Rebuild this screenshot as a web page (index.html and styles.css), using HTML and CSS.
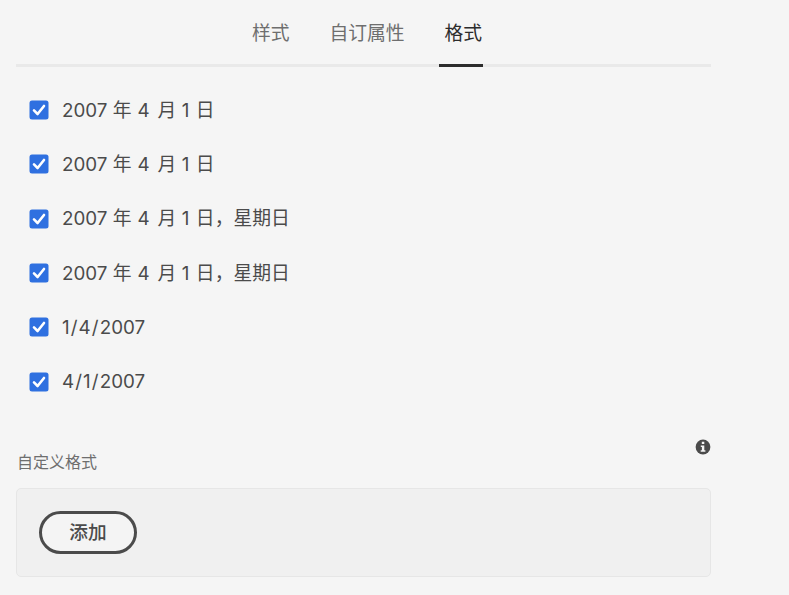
FILE: index.html
```html
<!DOCTYPE html>
<html lang="zh-CN">
<head>
<meta charset="utf-8">
<title>格式</title>
<link rel="stylesheet" href="styles.css">
</head>
<body>
<main class="panel">
  <nav class="tabs">
    <a class="tab">样式</a>
    <a class="tab">自订属性</a>
    <a class="tab active">格式</a>
  </nav>
  <ul class="formats">
    <li class="format"><svg class="check" viewBox="0 0 20 20"><rect x=".5" y=".5" width="19" height="19" rx="2.5"/><path d="M5 10.4 8.6 14 15 6"/></svg><span class="label">2007 年 <span class="month">4</span> 月 <span class="day">1</span> 日</span></li>
    <li class="format"><svg class="check" viewBox="0 0 20 20"><rect x=".5" y=".5" width="19" height="19" rx="2.5"/><path d="M5 10.4 8.6 14 15 6"/></svg><span class="label">2007 年 <span class="month">4</span> 月 <span class="day">1</span> 日</span></li>
    <li class="format"><svg class="check" viewBox="0 0 20 20"><rect x=".5" y=".5" width="19" height="19" rx="2.5"/><path d="M5 10.4 8.6 14 15 6"/></svg><span class="label">2007 年 <span class="month">4</span> 月 <span class="day">1</span> 日，星期日</span></li>
    <li class="format"><svg class="check" viewBox="0 0 20 20"><rect x=".5" y=".5" width="19" height="19" rx="2.5"/><path d="M5 10.4 8.6 14 15 6"/></svg><span class="label">2007 年 <span class="month">4</span> 月 <span class="day">1</span> 日，星期日</span></li>
    <li class="format"><svg class="check" viewBox="0 0 20 20"><rect x=".5" y=".5" width="19" height="19" rx="2.5"/><path d="M5 10.4 8.6 14 15 6"/></svg><span class="label">1<span class="slash">/</span>4<span class="slash">/</span>2007</span></li>
    <li class="format"><svg class="check" viewBox="0 0 20 20"><rect x=".5" y=".5" width="19" height="19" rx="2.5"/><path d="M5 10.4 8.6 14 15 6"/></svg><span class="label">4<span class="slash">/</span>1<span class="slash">/</span>2007</span></li>
  </ul>
  <div class="custom-head">
    <span class="custom-title">自定义格式</span>
    <svg class="info" viewBox="0 0 16 16"><circle cx="8" cy="8" r="7.4"/><path d="M6.8 2.8h2.5v2.3H6.8zM5.8 6.5h3.5v4.7h1.1v1.5H5.7v-1.5h1.2V8H5.8z"/></svg>
  </div>
  <section class="custom-box"><button class="add">添加</button></section>
</main>
</body>
</html>
```
FILE: styles.css
```css
* { box-sizing: border-box; }
body {
  margin: 0;
  background: #f5f5f5;
  color: #4b4b4b;
  font-family: "Noto Sans CJK SC", sans-serif;
}
.panel { width: 695px; margin-left: 16px; }
.tabs {
  display: flex;
  justify-content: center;
  gap: 33px;
  height: 67px;
  padding-left: 2px;
  border-bottom: 3px solid #e9e9e9;
}
.tab {
  height: 67px;
  padding: 0 1px 0 6px;
  font-size: 18.8px;
  line-height: 64px;
  color: #6e6e6e;
}
.tab.active { color: #2c2c2c; border-bottom: 3px solid #2c2c2c; }
.formats { list-style: none; margin: 0; padding: 16px 0 0 13px; }
.format { display: flex; align-items: center; height: 54.3px; }
.check { width: 20px; height: 20px; margin-right: 13px; }
.check rect { fill: #2f70e0; }
.check path { fill: none; stroke: #fff; stroke-width: 2.6; stroke-linecap: round; stroke-linejoin: round; }
.label {
  padding-top: 1.5px;
  font: 400 18.8px/28px Inter, "Noto Sans CJK SC", sans-serif;
  white-space: nowrap;
}
.month { margin: 0 2.4px 0 .8px; }
.day { margin: 0 1.2px 0 .3px; }
.slash { margin: 0 1.1px; }
.custom-head { display: flex; justify-content: space-between; height: 79px; padding-top: 30px; }
.custom-title { padding: 10px 0 0 1px; font-size: 16px; line-height: 24px; color: #6e6e6e; }
.info { width: 16px; height: 16px; }
.info circle { fill: #4b4b4b; }
.info path { fill: #f5f5f5; }
.custom-box {
  height: 89px;
  padding: 22px;
  background: #f0f0f0;
  border: 1px solid #e6e6e6;
  border-radius: 5px;
}
.add {
  display: block;
  width: 98px;
  height: 43px;
  padding: 0 0 3px;
  background: #f4f4f4;
  border: 3px solid #4b4b4b;
  border-radius: 22px;
  color: #4b4b4b;
  font: 500 18.7px/32px "Noto Sans CJK SC", sans-serif;
}
```
